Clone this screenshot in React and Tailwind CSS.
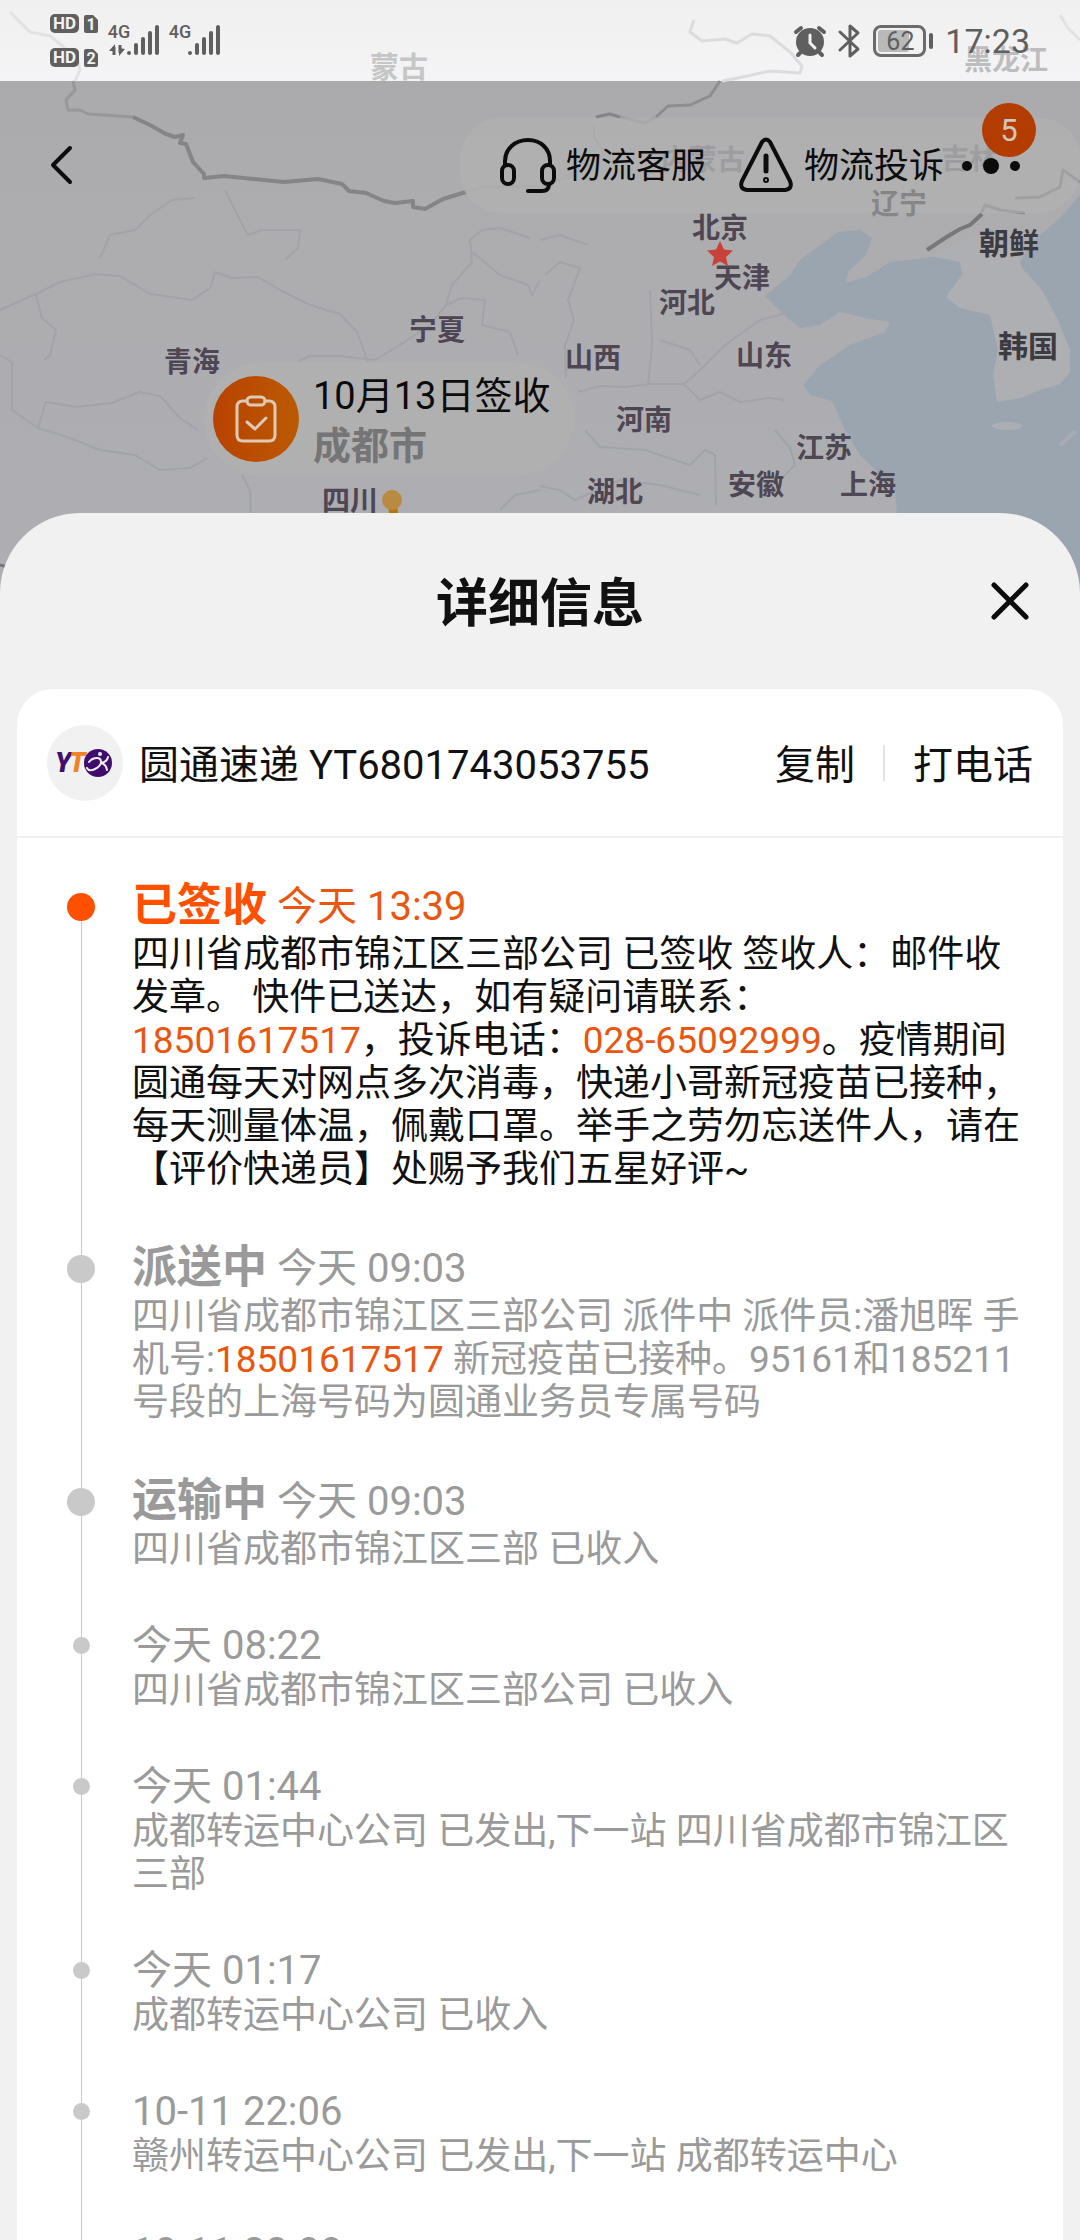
import React from "react";

const labels = [
  { t: "蒙古", x: 399, y: 78, s: 29, c: "#c6c6c7" },
  { t: "黑龙江", x: 1006, y: 70, s: 28, c: "#bdbdbf" },
  { t: "内蒙古", x: 703, y: 170, s: 28, c: "#9d9d9f" },
  { t: "吉林", x: 969, y: 169, s: 28, c: "#9d9d9f" },
  { t: "辽宁", x: 899, y: 214, s: 28, c: "#868588" },
  { t: "北京", x: 720, y: 238, s: 28 },
  { t: "天津", x: 742, y: 288, s: 28 },
  { t: "河北", x: 687, y: 313, s: 28 },
  { t: "朝鲜", x: 1009, y: 254, s: 30, c: "#3c3b3f" },
  { t: "韩国", x: 1028, y: 357, s: 30, c: "#3c3b3f" },
  { t: "山西", x: 593, y: 368, s: 28 },
  { t: "山东", x: 764, y: 366, s: 28 },
  { t: "河南", x: 644, y: 430, s: 28 },
  { t: "江苏", x: 824, y: 458, s: 28 },
  { t: "安徽", x: 756, y: 495, s: 28 },
  { t: "湖北", x: 615, y: 502, s: 28 },
  { t: "上海", x: 868, y: 495, s: 28 },
  { t: "宁夏", x: 437, y: 340, s: 28 },
  { t: "青海", x: 192, y: 372, s: 28 },
  { t: "四川", x: 350, y: 511, s: 28 },
];

const rivers = [
  "M0 310 L38 293 60 282 96 274 120 276 150 294 172 297 192 300 210 288 215 272 232 278 258 277 280 290 310 305 340 314 357 332 368 362",
  "M36 295 L42 318 56 330 50 355 44 360",
  "M0 355 L12 362 12 410 38 428 70 438 100 450 135 455 160 470 190 468 207 458",
  "M38 428 L46 402 76 407 112 403 140 392 160 396 180 418 198 430",
  "M242 475 L250 490 251 520",
  "M298 361 L310 356 340 356 375 360 400 345 430 325 446 305 462 298 485 300 482 325 510 332 518 355",
  "M446 305 L452 285 472 262 470 240 482 230 500 228 530 238",
  "M470 250 L500 275 528 285 532 295 540 280",
  "M545 275 L560 262 580 268 568 300 574 320 565 345 566 378",
  "M578 392 L600 386 625 387 650 384 684 384 700 370 725 345 760 320 790 312",
  "M684 384 L700 400 720 392 740 402 770 398 785 400",
  "M585 430 L600 447 645 450 690 465 705 450 715 455 716 505",
  "M540 486 L560 490 575 500 620 480 660 485 700 495",
  "M500 510 L515 495 540 490",
  "M775 430 L790 448 795 465 780 480",
  "M650 290 L652 345 648 385",
  "M660 340 L690 350 700 365",
  "M588 245 L560 235 540 240",
  "M225 190 L240 220 248 235 262 230 300 230 298 248 285 260",
  "M100 258 L110 235 135 230 150 215 172 200 195 198",
  "M594 124 L594 138 605 152",
];

function MapBackdrop() {
  return (
    <svg
      className="absolute inset-x-0 top-0 h-[640px] w-full"
      viewBox="0 0 1080 640"
      preserveAspectRatio="xMidYMin slice"
      role="img"
      aria-label="物流地图"
    >
      <defs>
        <linearGradient id="land" x1="0" y1="0" x2="0" y2="1">
          <stop offset="0" stopColor="#a9a9aa" />
          <stop offset="0.35" stopColor="#adadb0" />
          <stop offset="1" stopColor="#adaeb3" />
        </linearGradient>
        <linearGradient id="sky" x1="0" y1="0" x2="0" y2="1">
          <stop offset="0" stopColor="#f0f0f0" />
          <stop offset="1" stopColor="#f4f4f6" />
        </linearGradient>
      </defs>
      <rect width="1080" height="640" fill="url(#land)" />
      <path
        d="M765 296L790 275 800 260 820 245 838 232 860 230 872 238 866 255 848 272 846 283 868 276 890 262 925 258 970 250 1020 262 1034 240 1060 218 1080 195V640H900L897 513 895 490 860 455 845 430 832 401 810 395 803 385 820 365 850 345 885 332 890 322 865 318 840 312 820 325 800 328 785 316Z"
        fill="#9ba5b0"
      />
      <path
        d="M930 256L970 236 1015 246 1022 268 1042 290 1058 320 1070 350 1070 372 1060 384 1040 390 1020 398 997 402 993 375 998 350 990 315 960 308 946 297 962 275 960 262Z"
        fill="#aeafb2"
      />
      <ellipse cx="1007" cy="426" rx="15" ry="4" fill="#adaeb3" />
      <path d="M1060 445l16-14" stroke="#a9abb2" strokeWidth="4" />
      <g fill="none" stroke="#a2a3aa" strokeWidth="2" strokeLinejoin="round">
        {rivers.map((d) => (
          <path key={d} d={d} />
        ))}
      </g>
      <rect width="1080" height="81" fill="url(#sky)" />
      <g fill="none" strokeLinejoin="round" strokeWidth="3">
        <path d="M10 12L30 32 50 36 65 48 78 60 80 70 75 81" stroke="#e2e2e3" />
        <path
          d="M694 20L690 32 702 41 725 39 737 43 752 34 770 36 790 52 802 66 800 73 770 71 738 78 722 81"
          stroke="#dcdcde"
        />
        <path d="M1060 15L1068 28 1080 40" stroke="#e2e2e3" />
        <path
          d="M73 81L75 90 66 100 68 110 80 110 88 114 133 117"
          stroke="#97979a"
        />
        <path
          d="M133 117L150 125 166 134 175 137 183 135 180 143 186 144 193 162 204 174 204 178 224 176 284 182 318 179 342 184 349 191 366 193 384 201 395 203 413 201 413 207 425 209 443 199 466 192"
          stroke="#858588"
          strokeWidth="4"
        />
        <path d="M466 192L482 187 540 186 570 176 600 160" stroke="#a6a6a8" />
        <path d="M720 81L710 96 690 105 668 106 656 117" stroke="#8d8d90" />
        <path d="M596 117L610 114 620 117" stroke="#858588" />
        <path d="M620 117L645 123 656 117" stroke="#9d9d9f" />
        <path
          d="M927 250L945 238 960 229 970 225 982 214"
          stroke="#77777b"
          strokeWidth="4"
        />
        <path
          d="M982 212L985 205 1000 210 1025 213M1015 198L1040 197 1060 187 1063 170 1080 182"
          stroke="#8d8d90"
        />
        <path d="M0 565L8 567" stroke="#77777b" />
      </g>
      <rect
        x="460"
        y="118"
        width="620"
        height="95"
        rx="40"
        fill="#b4b4b4"
        fillOpacity="0.5"
      />
      <g
        fontFamily="'Noto Sans CJK SC', sans-serif"
        fontWeight="700"
        textAnchor="middle"
      >
        {labels.map((l) => (
          <text
            key={l.x + l.t}
            x={l.x}
            y={l.y}
            fontSize={l.s}
            fill={l.c || "#4e4652"}
          >
            {l.t}
          </text>
        ))}
      </g>
      <path
        d="M720 241l4 8.500 9 1-7 6.500 2 9-8-4.500-8 4.500 2-9-7-6.500 9-1z"
        fill="#c9423a"
      />
      <path d="M388 506h9l2 12h-9z" fill="#b97408" />
      <circle cx="392" cy="500" r="10" fill="#b98a42" />
    </svg>
  );
}

function Signal({ x }) {
  return (
    <path
      d={`M${x} 53v0M${x + 7} 53v-8M${x + 14} 53v-14M${x + 21} 53v-20M${x + 28} 53v-26`}
      stroke="#5f5f60"
      strokeWidth="4"
      strokeLinecap="round"
    />
  );
}

function StatusBar() {
  return (
    <div className="relative flex h-[81px] shrink-0 items-start justify-between pr-[50px] pl-[50px] text-[#5f5f60]">
      <svg
        className="mt-[10px] h-[60px] w-[175px]"
        viewBox="50 10 175 60"
        fontFamily="Roboto, sans-serif"
        fontWeight="700"
        textAnchor="middle"
        aria-label="信号"
      >
        {[14, 48].map((y, i) => (
          <g key={y}>
            <rect x="50" y={y} width="29" height="19" rx="5" fill="#5f5f60" />
            <path
              d={`M86 ${y + 1}h7l5 5v11q0 2-2 2h-10q-2 0-2-2v-14q0-2 2-2z`}
              fill="#5f5f60"
            />
            <text x="64.500" y={y + 15} fontSize="17" fill="#f2f2f2">
              HD
            </text>
            <text x="91" y={y + 16} fontSize="16" fill="#f2f2f2">
              {i + 1}
            </text>
          </g>
        ))}
        <text x="119" y="38" fontSize="18" fill="#5f5f60" fontWeight="500">
          4G
        </text>
        <text x="180" y="38" fontSize="18" fill="#5f5f60" fontWeight="500">
          4G
        </text>
        <path d="M114 55v-8M120 45v8" stroke="#5f5f60" strokeWidth="3" />
        <path d="M109 51l6-7v7zM119 48v8l6-7z" fill="#5f5f60" />
        <Signal x={129} />
        <Signal x={190} />
      </svg>
      <div className="mt-[22px] flex h-[38px] items-center">
        <svg className="h-[34px] w-[34px]" viewBox="0 0 34 34" aria-label="闹钟">
          <circle cx="17" cy="18" r="14" fill="#5f5f60" />
          <path
            d="M3 8l5-4M31 8l-5-4M7 29l-2 2M27 29l2 2"
            stroke="#5f5f60"
            strokeWidth="4"
            strokeLinecap="round"
          />
          <path
            d="M17 11v8l5 5"
            fill="none"
            stroke="#f2f2f2"
            strokeWidth="3"
            strokeLinecap="round"
          />
        </svg>
        <svg
          className="ml-[10px] h-[36px] w-[24px]"
          viewBox="0 0 24 36"
          fill="none"
          stroke="#5f5f60"
          strokeWidth="3"
          strokeLinejoin="round"
          strokeLinecap="round"
          aria-label="蓝牙"
        >
          <path d="M3 9l18 17-8 7V3l8 7L3 27" />
        </svg>
        <div className="ml-[12px] flex h-[32px] w-[53px] items-center rounded-[8px] border-[3px] border-[#6b6b6c] p-[2px]">
          <div className="flex h-full w-[31px] items-center justify-start rounded-[3px] bg-[#b9b9ba]">
            <span className="pl-[8px] text-[25px] leading-[25px]">62</span>
          </div>
        </div>
        <div className="ml-[3px] h-[16px] w-[4px] rounded-full bg-[#5f5f60]" />
        <span className="ml-[12px] text-[34px] leading-[38px]">17:23</span>
      </div>
    </div>
  );
}

function NavBar() {
  return (
    <header className="relative flex h-[168px] shrink-0 items-center justify-between pr-[60px] pl-[46px] text-[#0c0c0d]">
      <button type="button" aria-label="返回">
        <svg
          className="h-[44px] w-[30px]"
          viewBox="0 0 30 44"
          fill="none"
          stroke="currentColor"
          strokeWidth="4"
          strokeLinecap="round"
          strokeLinejoin="round"
        >
          <path d="M24 5L7 22l17 17" />
        </svg>
      </button>
      <div className="flex items-center">
        <button type="button" className="flex items-center gap-[10px]">
          <svg
            className="h-[56px] w-[56px]"
            viewBox="0 0 56 56"
            fill="none"
            stroke="currentColor"
            strokeWidth="4"
            strokeLinecap="round"
            strokeLinejoin="round"
          >
            <path d="M5 28V24C5 12 15 3 28 3s22 9 22 21v4" />
            <rect x="2" y="28" width="12" height="19" rx="6" />
            <rect x="42" y="28" width="12" height="19" rx="6" />
            <path d="M49 47c0 4-2 7-7 7H28" />
          </svg>
          <span className="pt-[4px] text-[35px] leading-[48px]">物流客服</span>
        </button>
        <button type="button" className="ml-[32px] flex items-center gap-[10px]">
          <svg
            className="h-[56px] w-[56px]"
            viewBox="0 0 56 56"
            fill="none"
            stroke="currentColor"
            strokeWidth="4"
            strokeLinecap="round"
            strokeLinejoin="round"
          >
            <path d="M24 5q4-5 8 0l20 39q3 8-5 9H9q-8-1-5-9z" />
            <path d="M28 19v15" strokeWidth="5" />
            <circle cx="28" cy="43" r="1" />
          </svg>
          <span className="pt-[4px] text-[35px] leading-[48px]">物流投诉</span>
        </button>
        <button
          type="button"
          aria-label="更多"
          className="relative ml-[18px] h-[40px] w-[58px]"
        >
          <svg className="h-[40px] w-[58px]" viewBox="0 0 58 40" fill="currentColor">
            <circle cx="5" cy="21" r="5" />
            <circle cx="29" cy="21" r="8" />
            <circle cx="53" cy="21" r="5" />
          </svg>
          <span className="absolute -top-[42px] left-[20px] flex h-[54px] w-[54px] items-center justify-center rounded-full bg-[#b33c00] text-[31px] leading-none text-[#d3c5bd]">
            5
          </span>
        </button>
      </div>
    </header>
  );
}

function DeliveryMarker() {
  return (
    <section className="relative mt-[114px] ml-[204px] flex h-[112px] w-fit shrink-0 items-center gap-[14px] rounded-[56px] bg-[#b0b1b0]/70 pr-[24px] pl-[9px]">
      <div className="flex h-[86px] w-[86px] items-center justify-center rounded-full bg-linear-to-r from-[#b84200] to-[#bb5a02]">
        <svg
          className="h-[50px] w-[44px]"
          viewBox="0 0 44 50"
          fill="none"
          stroke="#dfc9b6"
          strokeWidth="3"
          strokeLinecap="round"
          strokeLinejoin="round"
        >
          <path d="M13 7H9q-6 0-6 6v28q0 6 6 6h26q6 0 6-6V13q0-6-6-6h-4" />
          <rect x="13" y="3" width="18" height="8" rx="4" />
          <path d="M13 28l8 7 11-11" />
        </svg>
      </div>
      <div className="pt-[4px]">
        <p className="text-[38px] leading-[50px] text-[#0c0c0d]">10月13日签收</p>
        <p className="text-[38px] leading-[50px] font-bold text-[#757577]">成都市</p>
      </div>
    </section>
  );
}

function YtoLogo() {
  return (
    <svg className="h-[76px] w-[76px] shrink-0" viewBox="0 0 76 76" aria-label="YTO">
      <circle cx="38" cy="38" r="38" fill="#f1f1f1" />
      <g
        fontFamily="Roboto, sans-serif"
        fontWeight="900"
        fontStyle="italic"
        fontSize="27"
      >
        <text x="8" y="47" fill="#40106e">
          Y
        </text>
        <text x="22" y="47" fill="#f08224">
          T
        </text>
      </g>
      <circle cx="51" cy="38" r="14" fill="#3f0d6d" />
      <g fill="none" stroke="#f4eff7" strokeWidth="2" strokeLinecap="round">
        <path d="M50 33q4 0 4 4t-6 7-8-1M42 37q3-4 8-4M61 32q-1 5-7 6 5 1 6 7" />
      </g>
      <circle cx="53" cy="29" r="2" fill="#f4eff7" />
    </svg>
  );
}

function Phone({ number }) {
  return (
    <a href={`tel:${number}`} className="text-[#ea560f]">
      {number}
    </a>
  );
}

const events = [
  {
    status: "已签收",
    time: "今天 13:39",
    active: true,
    body: (
      <>
        四川省成都市锦江区三部公司 已签收 签收人：邮件收发章。 快件已送达，如有疑问请联系：
        <Phone number="18501617517" />
        ，投诉电话：
        <Phone number="028-65092999" />
        。疫情期间圆通每天对网点多次消毒，快递小哥新冠疫苗已接种，每天测量体温，佩戴口罩。举手之劳勿忘送件人，请在【评价快递员】处赐予我们五星好评~
      </>
    ),
  },
  {
    status: "派送中",
    time: "今天 09:03",
    body: (
      <>
        四川省成都市锦江区三部公司 派件中 派件员:潘旭晖 手机号:
        <Phone number="18501617517" />{" "}
        新冠疫苗已接种。95161和185211号段的上海号码为圆通业务员专属号码
      </>
    ),
  },
  { status: "运输中", time: "今天 09:03", body: "四川省成都市锦江区三部 已收入" },
  { time: "今天 08:22", body: "四川省成都市锦江区三部公司 已收入" },
  {
    time: "今天 01:44",
    body: "成都转运中心公司 已发出,下一站 四川省成都市锦江区三部",
  },
  { time: "今天 01:17", body: "成都转运中心公司 已收入" },
  { time: "10-11 22:06", body: "赣州转运中心公司 已发出,下一站 成都转运中心" },
  { time: "10-11 22:00", body: "赣州转运中心公司 已收入" },
];

function TimelineItem({ event, first }) {
  const big = Boolean(event.status);
  return (
    <li
      className={`flex gap-[37px] pr-[36px] pl-[50px] ${
        event.active ? "text-[#111]" : "text-[#9a9a9a]"
      }`}
    >
      <div className="flex w-[28px] shrink-0 flex-col items-center">
        <span
          className={`w-px ${big ? "h-[14px]" : "h-[16px]"} ${first ? "" : "bg-[#c9c9c9]"}`}
        />
        <span
          className={`rounded-full ${big ? "h-[28px] w-[28px]" : "h-[17px] w-[17px]"} ${
            event.active ? "bg-[#ff5000]" : "bg-[#c9c9c9]"
          }`}
        />
        <span className="w-px flex-1 bg-[#c9c9c9]" />
      </div>
      <div className="min-w-0 flex-1 pb-[50px]">
        <h3
          className={`flex items-center gap-[10px] ${big ? "h-[54px]" : "h-[48px]"} ${
            event.active ? "text-[#ea560f]" : ""
          }`}
        >
          {big && (
            <span
              className={`text-[45px] leading-[54px] font-bold ${
                event.active ? "text-[#ff5000]" : ""
              }`}
            >
              {event.status}
            </span>
          )}
          <time className="pt-[2px] text-[40px] leading-[46px]">{event.time}</time>
        </h3>
        <p className="text-[37px] leading-[43px]">{event.body}</p>
      </div>
    </li>
  );
}

function DetailSheet() {
  return (
    <main className="relative mt-[38px] flex min-h-0 flex-1 flex-col rounded-t-[80px] bg-[#f1f1f1] text-[#111]">
      <div className="relative flex h-[176px] shrink-0 items-center justify-center">
        <h1 className="pt-[8px] text-[52px] leading-[64px] font-bold">详细信息</h1>
        <button type="button" aria-label="关闭" className="absolute right-[48px]">
          <svg
            className="h-[44px] w-[44px]"
            viewBox="0 0 44 44"
            fill="none"
            stroke="#0c0c0d"
            strokeWidth="5"
            strokeLinecap="round"
          >
            <path d="M6 6l32 32M38 6L6 38" />
          </svg>
        </button>
      </div>
      <section className="mx-[17px] flex min-h-0 flex-1 flex-col rounded-t-[36px] bg-white">
        <div className="flex h-[149px] shrink-0 items-center border-b-2 border-[#f0f0f0] pr-[30px] pl-[30px] text-[40px] leading-[52px]">
          <YtoLogo />
          <h2 className="ml-[16px] flex-1 pt-[6px]">圆通速递 YT6801743053755</h2>
          <button type="button" className="pt-[6px]">
            复制
          </button>
          <span className="mx-[28px] h-[36px] w-[2px] bg-[#e3e3e3]" />
          <button type="button" className="pt-[6px]">
            打电话
          </button>
        </div>
        <ul className="min-h-0 flex-1 overflow-y-auto pt-[41px] [scrollbar-width:none]">
          {events.map((event, i) => (
            <TimelineItem key={event.time + i} event={event} first={i === 0} />
          ))}
        </ul>
      </section>
    </main>
  );
}

export default function App() {
  return (
    <div className="relative flex h-screen flex-col overflow-hidden bg-[#adaeb3] font-[Roboto,'Noto_Sans_CJK_SC',sans-serif]">
      <MapBackdrop />
      <StatusBar />
      <NavBar />
      <DeliveryMarker />
      <DetailSheet />
    </div>
  );
}
